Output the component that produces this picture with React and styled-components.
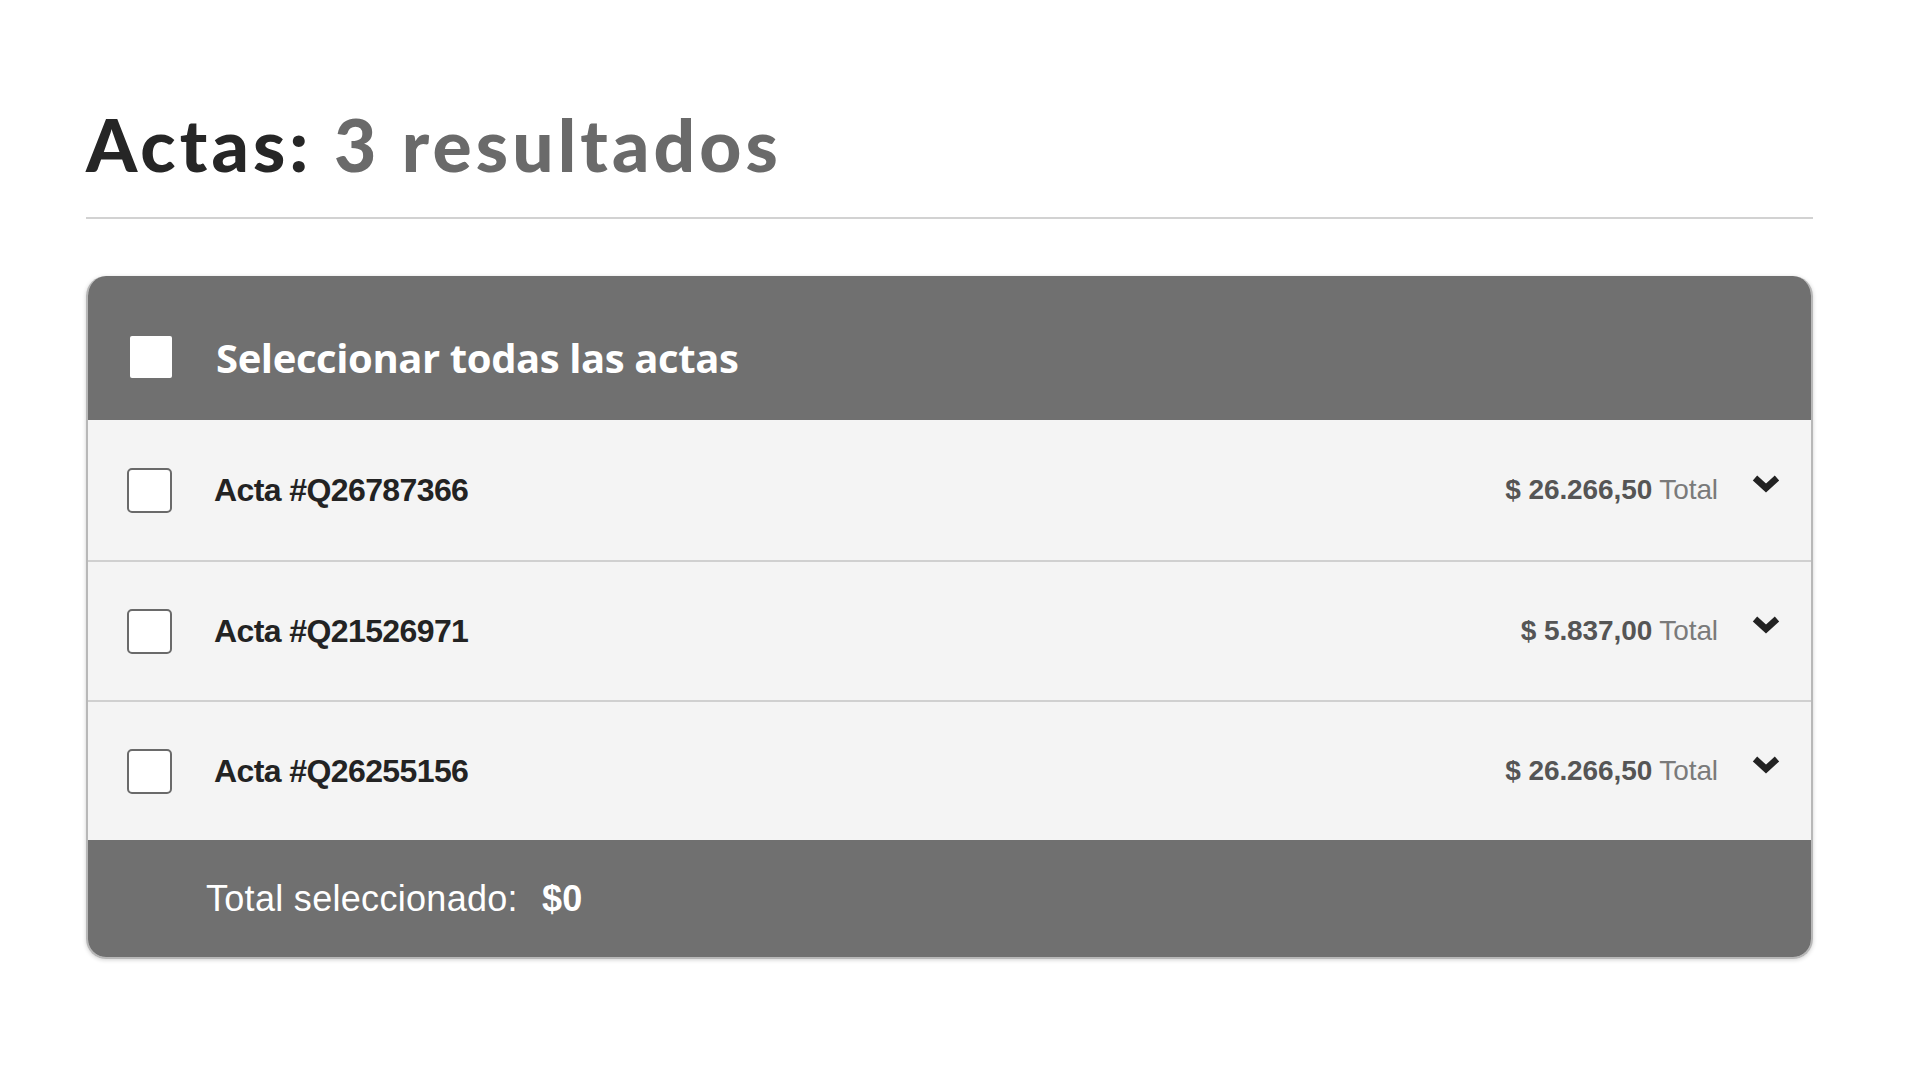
import styled, { createGlobalStyle } from 'styled-components'

const actas = [
  { id: 'Q26787366', total: '26.266,50' },
  { id: 'Q21526971', total: '5.837,00' },
  { id: 'Q26255156', total: '26.266,50' },
]

const GlobalStyle = createGlobalStyle`
  * { box-sizing: border-box; }
  body {
    margin: 0;
    background: #fff;
    font-family: 'Liberation Sans', Arial, sans-serif;
  }
`

const Chevron = () => (
  <svg width='30' height='22' viewBox='0 0 30 22'>
    <polyline
      points='4,5 15,15 26,5'
      fill='none'
      stroke='currentColor'
      strokeWidth='6.5'
      strokeLinejoin='miter'
    />
  </svg>
)

const App = () => {
  return (
    <Page>
      <GlobalStyle />
      <Title>
        Actas: <span>3 resultados</span>
      </Title>
      <Divider />
      <Card>
        <CardHeader>
          <Box variant='header' />
          <HeaderLabel>Seleccionar todas las actas</HeaderLabel>
        </CardHeader>
        {actas.map((acta) => (
          <Row key={acta.id}>
            <Box />
            <RowLabel>Acta #{acta.id}</RowLabel>
            <Amount>
              <strong>$ {acta.total}</strong> Total
            </Amount>
            <Toggle>
              <Chevron />
            </Toggle>
          </Row>
        ))}
        <CardFooter>
          Total seleccionado: <strong>$0</strong>
        </CardFooter>
      </Card>
    </Page>
  )
}

export default App

const Page = styled.div`
  padding: 104px 107px 120px 86px;
`

const Title = styled.h1`
  margin: 0;
  font-family: 'Lato', sans-serif;
  font-weight: 900;
  font-size: 73px;
  line-height: 80px;
  letter-spacing: 4.1px;
  color: #262626;

  span {
    color: #6a6a6a;
  }
`

const Divider = styled.hr`
  margin: 33px 0 0;
  border: 0;
  height: 2px;
  background: #d2d2d2;
`

const Card = styled.section`
  margin-top: 57px;
  border: 2px solid #b8b8b8;
  border-top: 0;
  border-radius: 20px;
  overflow: hidden;
  box-shadow: 0 1px 4px rgba(0, 0, 0, 0.18);
`

const CardHeader = styled.div`
  display: flex;
  align-items: center;
  gap: 44px;
  height: 144px;
  padding: 18px 0 0 42px;
  background: #707070;
`

const Box = styled.span`
  flex: none;
  display: block;
  width: ${(p) => (p.variant === 'header' ? '42px' : '45px')};
  height: ${(p) => (p.variant === 'header' ? '42px' : '45px')};
  background: #fff;
  border: ${(p) => (p.variant === 'header' ? '0' : '2px solid #6a6a6a')};
  border-radius: ${(p) => (p.variant === 'header' ? '2px' : '5px')};
`

const HeaderLabel = styled.span`
  font-family: 'Open Sans', sans-serif;
  font-weight: 700;
  font-size: 40px;
  letter-spacing: -0.4px;
  color: #fff;
`

const Row = styled.div`
  display: flex;
  align-items: center;
  gap: 42px;
  height: 140px;
  padding: 0 30px 0 39px;
  background: #f4f4f4;
  border-top: 2px solid #d0d0d0;

  &:nth-child(2) {
    border-top: 0;
  }
`

const RowLabel = styled.span`
  flex: 1;
  font-weight: 700;
  font-size: 32px;
  letter-spacing: -0.6px;
  color: #232323;
`

const Amount = styled.span`
  font-size: 28px;
  letter-spacing: -0.1px;
  color: #7a7a7a;

  strong {
    color: #555;
  }
`

const Toggle = styled.span`
  display: flex;
  align-items: center;
  margin-left: -9px;
  margin-bottom: 12px;
  color: #222;
`

const CardFooter = styled.div`
  display: flex;
  align-items: center;
  gap: 24px;
  height: 117px;
  padding-left: 118px;
  background: #707070;
  font-size: 36px;
  letter-spacing: 0.3px;
  color: #fff;

  strong {
    font-size: 36px;
  }
`
